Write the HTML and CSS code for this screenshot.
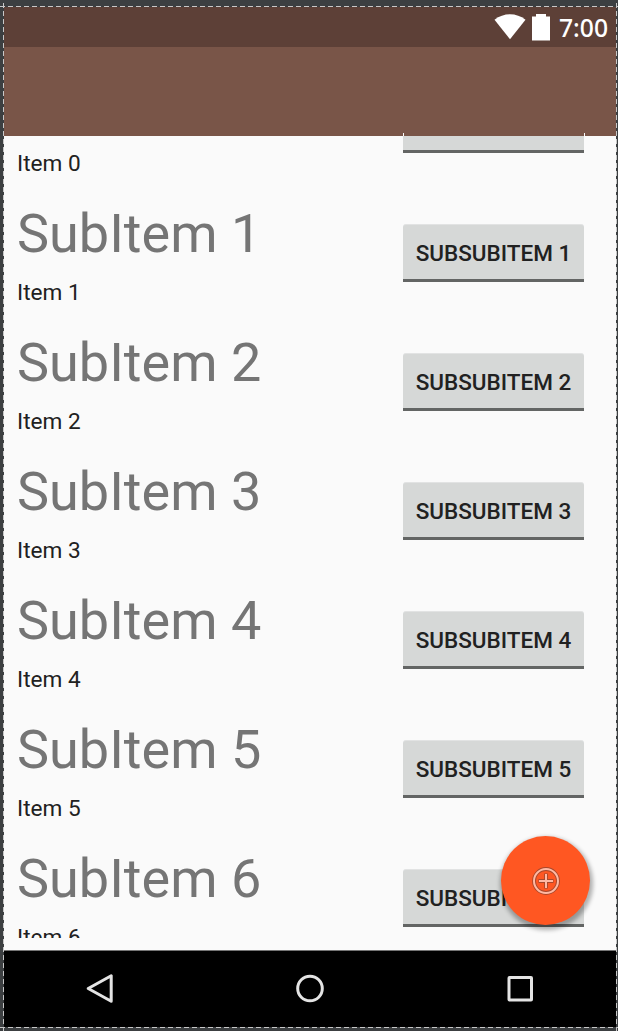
FILE: index.html
```html
<!DOCTYPE html>
<html lang="en">
<head>
<meta charset="utf-8">
<title>Layout preview</title>
<link rel="stylesheet" href="styles.css">
</head>
<body>
<div class="device">
  <header class="status-bar">
    <svg class="wifi" width="32" height="26" viewBox="0 0 32 26"><path d="M0.500 5.800C9.500-1.600 22.500-1.600 31.500 5.800L16 25.300Z" fill="#fff"/></svg>
    <svg class="battery" width="18" height="27" viewBox="0 0 18 27"><path d="M4 0H14V2.500H18V26.500H0V2.500H4Z" fill="#fff"/></svg>
    <span class="clock">7:00</span>
  </header>
  <div class="toolbar"></div>
  <main class="content">
    <div class="list">
      <div class="row"><div class="labels"><div class="sub"></div><div class="item">Item 0</div></div><button class="btn"></button></div>
      <div class="row"><div class="labels"><div class="sub">SubItem 1</div><div class="item">Item 1</div></div><button class="btn">SUBSUBITEM 1</button></div>
      <div class="row"><div class="labels"><div class="sub">SubItem 2</div><div class="item">Item 2</div></div><button class="btn">SUBSUBITEM 2</button></div>
      <div class="row"><div class="labels"><div class="sub">SubItem 3</div><div class="item">Item 3</div></div><button class="btn">SUBSUBITEM 3</button></div>
      <div class="row"><div class="labels"><div class="sub">SubItem 4</div><div class="item">Item 4</div></div><button class="btn">SUBSUBITEM 4</button></div>
      <div class="row"><div class="labels"><div class="sub">SubItem 5</div><div class="item">Item 5</div></div><button class="btn">SUBSUBITEM 5</button></div>
      <div class="row"><div class="labels"><div class="sub">SubItem 6</div><div class="item">Item 6</div></div><button class="btn">SUBSUBITEM 6</button></div>
    </div>
    <div class="edge-ticks"></div>
    <div class="fab">
      <svg width="30" height="30" viewBox="0 0 30 30" fill="none"><g stroke="#a8482c" stroke-width="3.800"><circle cx="15" cy="15" r="12"/><path d="M15 7.500V22.500M7.500 15H22.500"/></g><g stroke="#ffb9a3" stroke-width="2"><circle cx="15" cy="15" r="12"/><path d="M15 8V22M8 15H22"/></g></svg>
    </div>
  </main>
  <nav class="nav-bar">
    <svg width="32" height="32" viewBox="0 0 32 32"><path d="M27.200 2.700V28.300L4.200 15.500Z"/></svg>
    <svg width="32" height="32" viewBox="0 0 32 32"><circle cx="16" cy="15.500" r="12.300"/></svg>
    <svg width="32" height="32" viewBox="0 0 32 32"><rect x="5" y="4.500" width="22.500" height="22.500" rx="0.500"/></svg>
  </nav>
</div>
<div class="guide guide-top"></div>
<div class="guide guide-bottom"></div>
<div class="guide guide-left"></div>
<div class="guide guide-right"></div>
</body>
</html>
```
FILE: styles.css
```css
* { box-sizing: border-box; }
body {
  margin: 0;
  width: 618px;
  height: 1031px;
  padding: 7px 2px 4px 4px;
  position: relative;
  overflow: hidden;
  background: #3c3f41;
  font-family: Roboto, sans-serif;
}
.device { width: 612px; height: 1020px; display: flex; flex-direction: column; }
.status-bar {
  height: 40px;
  background: #5d4037;
  display: flex;
  justify-content: flex-end;
  align-items: flex-start;
  padding: 7px 8px 0 0;
}
.battery { margin-left: 6px; }
.clock {
  width: 49px;
  margin-left: 9px;
  color: #fff;
  font: 500 24.7px/28px "Noto Sans", sans-serif;
  white-space: nowrap;
}
.toolbar { height: 89px; background: #795548; }
.content { height: 815px; background: #fafafa; position: relative; border-bottom: 1px solid #757575; }
.list { height: 802px; overflow: hidden; }
.row {
  height: 129px;
  padding: 0 32px 0 13px;
  display: flex;
  justify-content: space-between;
}
.row:first-child { margin-top: -70px; }
.sub { height: 64px; font-size: 54px; line-height: 64px; margin-top: 7px; color: #757575; }
.item { font-size: 22.6px; line-height: 27px; margin-top: 13px; color: #212121; }
.btn {
  width: 181px;
  height: 58px;
  margin-top: 29px;
  padding: 3px 0 0;
  border: 0;
  border-top: 1px solid #e2e3e3;
  border-bottom: 3px solid #636564;
  border-radius: 3px 3px 0 0;
  background: #d6d8d7;
  color: #212121;
  font: 500 22.5px/51px Roboto, sans-serif;
  white-space: nowrap;
}
/* sliver of the scrolled button outline above the list edge */
.edge-ticks {
  position: absolute;
  left: 399px;
  top: -3px;
  width: 182px;
  height: 3px;
  border: solid #fafafa;
  border-width: 0 1px;
}
.fab {
  position: absolute;
  left: 497px;
  top: 700px;
  width: 89px;
  height: 89px;
  border-radius: 50%;
  background: #ff5722;
  box-shadow: 1px 3px 4px 2px rgba(0, 0, 0, .3);
  display: flex;
  align-items: center;
  justify-content: center;
}
.nav-bar {
  height: 76px;
  background: #000;
  display: flex;
  justify-content: space-between;
  align-items: center;
  padding: 0 80px;
}
.nav-bar svg { fill: none; stroke: #e4e4e4; stroke-width: 3; stroke-linejoin: round; }
.guide { position: absolute; }
.guide-top, .guide-bottom {
  left: 0; right: 0; height: 1px;
  background: repeating-linear-gradient(90deg, #c8c8c8 0 5px, #3c3f41 5px 8px);
}
.guide-top { top: 6px; }
.guide-bottom { top: 1027px; }
.guide-left, .guide-right {
  top: 3px; bottom: 0; width: 1px;
  background: repeating-linear-gradient(180deg, #c8c8c8 0 5px, #3c3f41 5px 8px);
}
.guide-left { left: 3px; }
.guide-right { left: 616px; }
```
